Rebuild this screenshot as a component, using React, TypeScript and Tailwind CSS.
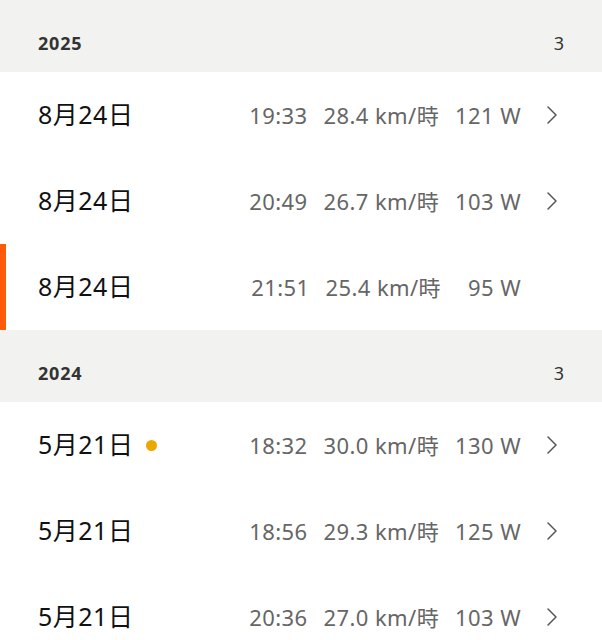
import React from "react";

type Ride = {
  date: string;
  time: string;
  speed: string;
  watts: string;
  dot?: boolean;
  active?: boolean;
  chevron?: boolean;
};

const groups: { year: string; count: number; rides: Ride[] }[] = [
  {
    year: "2025",
    count: 3,
    rides: [
      { date: "8月24日", time: "19:33", speed: "28.4 km/時", watts: "121 W", chevron: true },
      { date: "8月24日", time: "20:49", speed: "26.7 km/時", watts: "103 W", chevron: true },
      { date: "8月24日", time: "21:51", speed: "25.4 km/時", watts: "95 W", active: true },
    ],
  },
  {
    year: "2024",
    count: 3,
    rides: [
      { date: "5月21日", time: "18:32", speed: "30.0 km/時", watts: "130 W", dot: true, chevron: true },
      { date: "5月21日", time: "18:56", speed: "29.3 km/時", watts: "125 W", chevron: true },
      { date: "5月21日", time: "20:36", speed: "27.0 km/時", watts: "103 W", chevron: true },
    ],
  },
];

function Chevron() {
  return (
    <svg width="12" height="20" viewBox="0 0 12 20" fill="none">
      <path d="M2 2l8 8-8 8" stroke="#555" strokeWidth="1.5" strokeLinecap="round" strokeLinejoin="round" />
    </svg>
  );
}

function RideRow({ ride }: { ride: Ride }) {
  return (
    <div className="relative flex h-[86px] items-center bg-white pl-[38px] pr-[43px]">
      {ride.active ? <div className="absolute inset-y-0 left-0 w-[6px] bg-[#ff5a0a]" /> : null}
      <div className="flex items-center gap-[13px]">
        <span className="text-[25px] tracking-[0.5px] text-[#111]">{ride.date}</span>
        {ride.dot ? <span className="h-[11px] w-[11px] rounded-full bg-[#e9a900]" /> : null}
      </div>
      <div className="ml-auto flex items-center gap-[16px] text-[22px] tracking-[0.4px] text-[#666]">
        <span>{ride.time}</span>
        <span>{ride.speed}</span>
        <span className="min-w-[64px] text-right">{ride.watts}</span>
      </div>
      <div className="ml-[24px] flex w-[14px] items-center justify-center">
        {ride.chevron ? <Chevron /> : null}
      </div>
    </div>
  );
}

export default function App() {
  return (
    <div
      className="h-[640px] w-[602px] overflow-hidden bg-white"
      style={{ fontFamily: '"Noto Sans", "Noto Sans CJK JP", sans-serif' }}
    >
      {groups.map((g) => (
        <div key={g.year}>
          <div className="flex h-[72px] items-center justify-between bg-[#f2f2f0] pl-[38px] pr-[38px] pt-[14px] text-[#333]">
            <span className="text-[18px] font-bold tracking-[0.8px]">{g.year}</span>
            <span className="text-[18px]">{g.count}</span>
          </div>
          {g.rides.map((r, i) => (
            <RideRow key={i} ride={r} />
          ))}
        </div>
      ))}
    </div>
  );
}
